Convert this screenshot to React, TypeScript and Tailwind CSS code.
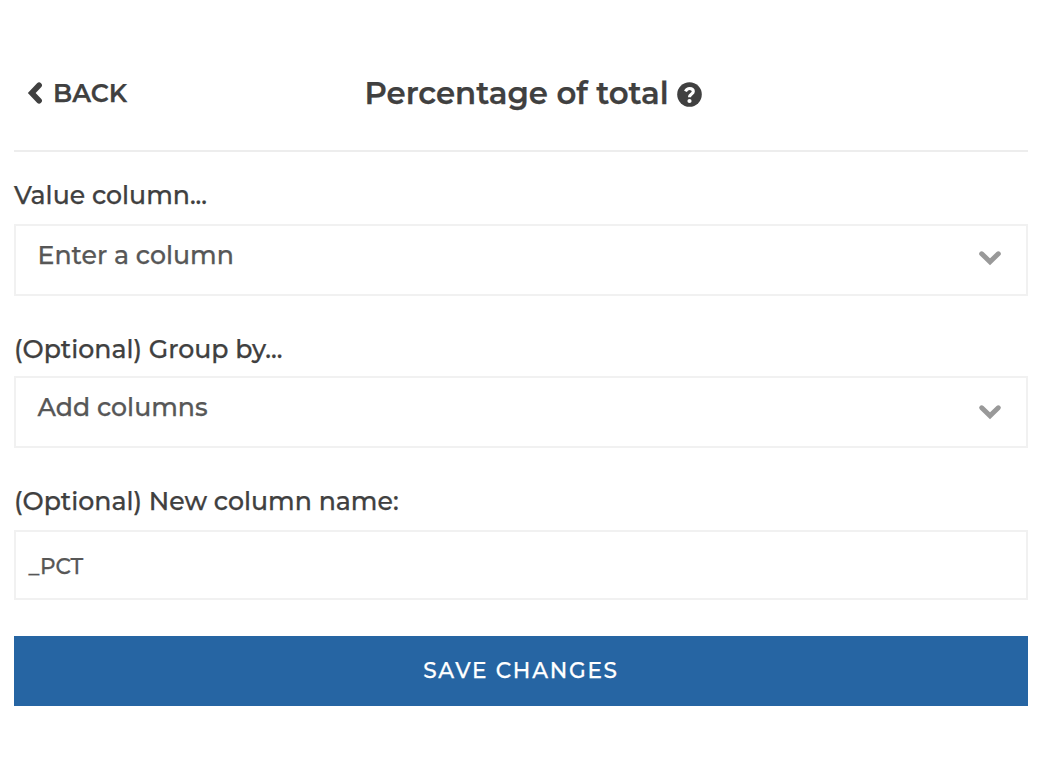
import React from 'react';

function ChevronLeft() {
  return (
    <svg className="h-[24px] w-[16px]" viewBox="0 0 16 24" fill="none" stroke="currentColor" strokeWidth="5.6" strokeLinecap="round">
      <path d="M12.1 4.2 L4.7 12 L12.1 19.8" />
    </svg>
  );
}

function ChevronDown({ className }: { className: string }) {
  return (
    <svg className={className} viewBox="0 0 24 24" fill="none" stroke="currentColor" strokeWidth="5" strokeLinecap="round">
      <path d="M3.7 7.8 L12 15.8 L20.3 7.8" />
    </svg>
  );
}

function HelpIcon({ className }: { className: string }) {
  return (
    <svg className={className} viewBox="0 0 25 25" fill="none">
      <circle cx="12.5" cy="12.5" r="12.3" fill="currentColor" />
      <path d="M8.5 9.3 C9.4 7.4 10.8 6.5 12.6 6.5 C14.8 6.5 16.3 7.8 16.3 9.6 C16.3 12.1 12.5 12 12.5 15.2" stroke="white" strokeWidth="3.1" />
      <circle cx="12.5" cy="19" r="2.1" fill="white" />
    </svg>
  );
}

interface SelectFieldProps {
  label: string;
  text: string;
  className: string;
  boxClass: string;
  iconClass: string;
}

function SelectField({ label, text, className, boxClass, iconClass }: SelectFieldProps) {
  return (
    <div className={className}>
      <div className="flex h-[30px] items-center pt-px text-[25.2px] font-medium text-[#404040]">
        <span className="whitespace-nowrap">{label}</span>
      </div>
      <div className={`flex h-[72px] justify-between border-2 border-[#f1f1f1] pr-[24px] pl-[21.5px] ${boxClass}`}>
        <span className="pt-[14px] text-[25.2px] leading-[30px] font-medium text-[#575757]">{text}</span>
        <ChevronDown className={iconClass} />
      </div>
    </div>
  );
}

export default function App() {
  return (
    <main className="h-[764px] w-[1046px] overflow-hidden bg-white pr-[18px] pl-[14px] font-['Montserrat','Inter',sans-serif] [-webkit-text-stroke:0.25px]">
      <header className="grid h-[152px] grid-cols-[350.5px_1fr] border-b-2 border-[#ededed] pt-[73px]">
        <button className="flex h-10 items-center gap-[10px] pl-[13px] text-[25.2px] font-semibold text-[#404040]">
          <ChevronLeft />
          <span className="pt-px">BACK</span>
        </button>
        <h1 className="flex h-10 items-center gap-[8px] text-[30.8px] font-semibold text-[#404040]">
          <span className="whitespace-nowrap">Percentage of total</span>
          <HelpIcon className="mt-[2px] size-[25px]" />
        </h1>
      </header>
      <SelectField
        className="pt-[28px]"
        label="Value column..."
        text="Enter a column"
        boxClass="mt-[14px]"
        iconClass="mt-[20px] size-[24px] text-[#999999]"
      />
      <SelectField
        className="pt-[38px]"
        label="(Optional) Group by..."
        text="Add columns"
        boxClass="mt-[12px]"
        iconClass="mt-[22px] size-[24px] text-[#999999]"
      />
      <div className="pt-[38px]">
        <div className="flex h-[30px] items-center pt-px text-[25.2px] font-medium text-[#404040]">
          <span>(Optional) New column name:</span>
        </div>
        <div className="mt-[14px] flex h-[70px] items-center border-2 border-[#f1f1f1] pt-[3px] pl-[12.5px] text-[21.6px] font-medium text-[#575757]">
          <span>_PCT</span>
        </div>
      </div>
      <button className="mt-[36px] flex h-[70px] w-full items-center justify-center bg-[#2665a3] pb-[2px] text-[21.6px] font-medium tracking-[1.75px] text-white">
        <span>SAVE CHANGES</span>
      </button>
    </main>
  );
}
